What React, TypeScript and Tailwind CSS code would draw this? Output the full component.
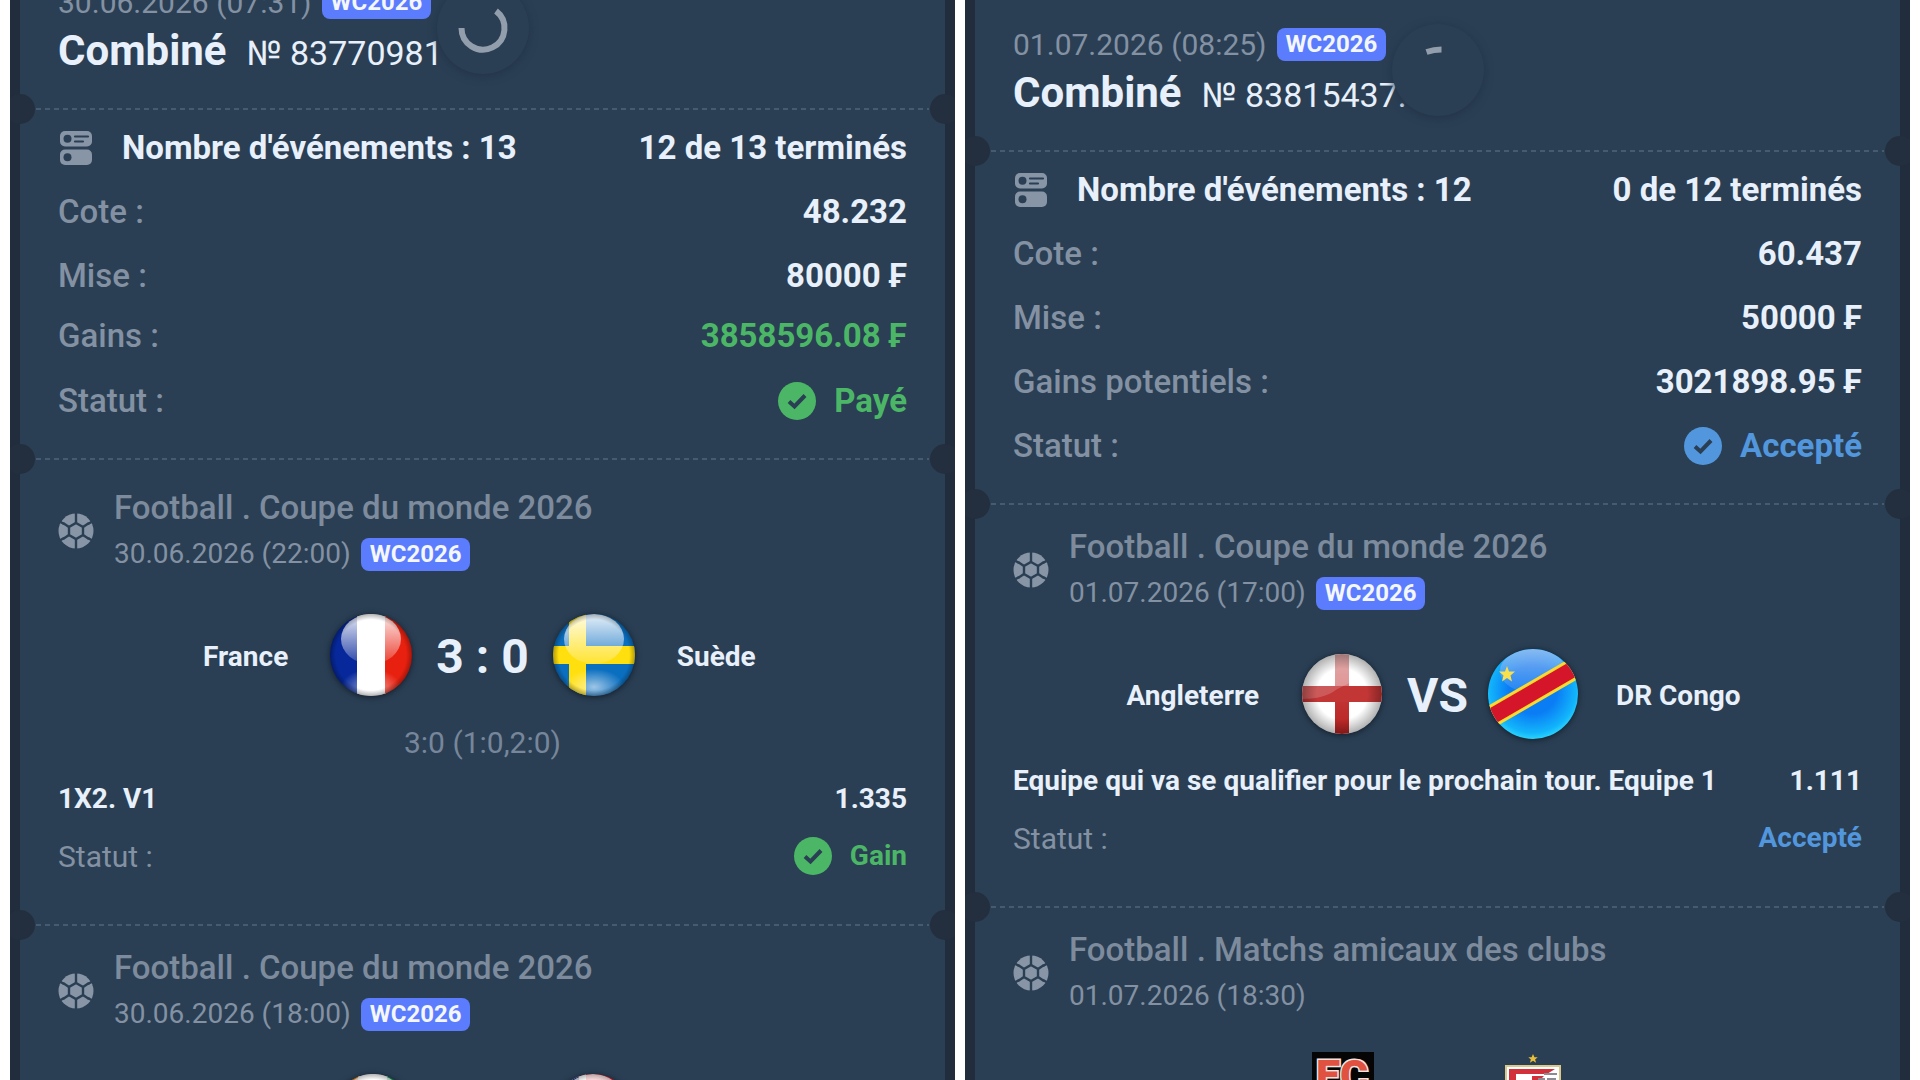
import type { ReactNode } from 'react';
import clsx from 'clsx';

type Tone = 'green' | 'blue' | 'light';

type Match = {
    title: string;
    date: string;
    badge?: string;
    home?: string;
    away?: string;
    homeIcon: ReactNode;
    awayIcon: ReactNode;
    score?: string;
    wideScore?: boolean;
    details?: string;
    bet?: string;
    odds?: string;
    status?: string;
    tone?: Tone;
    withCheck?: boolean;
};

const toneClass: Record<Tone, string> = {
    green: 'text-[#4bb766]',
    blue: 'text-[#5297de]',
    light: 'text-[#e8f0fb]',
};

const Gloss = ({ id }: { id: string }) => (
    <>
        <defs>
            <linearGradient id={`${id}-top`} x1="0" y1="0" x2="0" y2="1">
                <stop offset="0" stopColor="#fff" stopOpacity="0.9" />
                <stop offset="1" stopColor="#fff" stopOpacity="0.15" />
            </linearGradient>
            <radialGradient id={`${id}-low`}>
                <stop offset="0" stopColor="#fff" stopOpacity="0.6" />
                <stop offset="1" stopColor="#fff" stopOpacity="0" />
            </radialGradient>
            <radialGradient id={`${id}-edge`}>
                <stop offset="0.84" stopColor="#000" stopOpacity="0" />
                <stop offset="1" stopColor="#000" stopOpacity="0.35" />
            </radialGradient>
        </defs>
        <ellipse cx="45" cy="29" rx="30" ry="25" fill={`url(#${id}-top)`} />
        <ellipse cx="45" cy="77" rx="30" ry="18" fill={`url(#${id}-low)`} />
        <circle cx="45" cy="45" r="42" fill={`url(#${id}-edge)`} />
    </>
);

const Flag = ({ id, radius = 41, gloss = true, children }: { id: string; radius?: number; gloss?: boolean; children: ReactNode }) => (
    <svg viewBox="0 0 90 90" className="size-[90px] shrink-0 overflow-visible drop-shadow-[0_1px_3px_#121c28]" aria-hidden="true">
        <defs>
            <clipPath id={`${id}-clip`}>
                <circle cx="45" cy="45" r={radius} />
            </clipPath>
        </defs>
        <g clipPath={`url(#${id}-clip)`}>
            {children}
            {gloss && <Gloss id={id} />}
        </g>
    </svg>
);

const FranceFlag = () => (
    <Flag id="france">
        <rect width="32" height="90" fill="#06289a" />
        <rect x="31" width="29" height="90" fill="#fff" />
        <rect x="59" width="31" height="90" fill="#e8200f" />
    </Flag>
);

const SwedenFlag = () => (
    <Flag id="sweden">
        <rect width="90" height="90" fill="#0b6fc0" />
        <rect x="20" width="17" height="90" fill="#ffdf0d" />
        <rect y="36" width="90" height="18" fill="#ffdf0d" />
    </Flag>
);

const IvoryCoastFlag = () => (
    <Flag id="ivory">
        <rect width="32" height="90" fill="#f08a1d" />
        <rect x="30" width="30" height="90" fill="#fff" />
        <rect x="59" width="31" height="90" fill="#0d9a4e" />
    </Flag>
);

const NorwayFlag = () => (
    <Flag id="norway">
        <rect width="90" height="90" fill="#e01f2b" />
        <path d="M28 0v90M0 45h90" stroke="#fff" strokeWidth="20" />
        <path d="M26 0v90M0 45h90" stroke="#0d2c80" strokeWidth="10" />
    </Flag>
);

const EnglandFlag = () => (
    <Flag id="england" radius={40} gloss={false}>
        <defs>
            <radialGradient id="england-shade">
                <stop offset="0.6" stopColor="#000" stopOpacity="0" />
                <stop offset="1" stopColor="#000" stopOpacity="0.35" />
            </radialGradient>
            <linearGradient id="england-bar" x1="0" y1="0" x2="0" y2="1">
                <stop offset="0" stopColor="#dc9a9a" />
                <stop offset="0.4" stopColor="#d98080" />
                <stop offset="0.55" stopColor="#c23434" />
                <stop offset="1" stopColor="#b82020" />
            </linearGradient>
        </defs>
        <rect width="90" height="90" fill="#fff" />
        <rect x="38" width="14" height="90" fill="url(#england-bar)" />
        <rect y="37" width="90" height="16" fill="#c23636" />
        <path d="M0 0h90C78 30 50 32 36 43 24 50 10 50 0 50z" fill="#fff" fillOpacity="0.18" />
        <circle cx="45" cy="45" r="42" fill="url(#england-shade)" />
    </Flag>
);

const CongoFlag = () => (
    <Flag id="congo" radius={45} gloss={false}>
        <defs>
            <radialGradient id="congo-sky" cx="0.5" cy="0.45" r="0.6">
                <stop offset="0.45" stopColor="#0a7df5" />
                <stop offset="0.8" stopColor="#12b4fb" />
                <stop offset="1" stopColor="#3beafc" />
            </radialGradient>
            <linearGradient id="congo-gloss" x1="0" y1="0" x2="0" y2="1">
                <stop offset="0" stopColor="#9dbcf0" stopOpacity="0.85" />
                <stop offset="1" stopColor="#6ea4f0" stopOpacity="0.25" />
            </linearGradient>
        </defs>
        <rect width="90" height="90" fill="url(#congo-sky)" />
        <ellipse cx="45" cy="22" rx="33" ry="22" fill="url(#congo-gloss)" />
        <path d="M-6 73 94 15" stroke="#fcd92c" strokeWidth="22" />
        <path d="M-6 73 94 15" stroke="#d4152a" strokeWidth="16" />
        <path d="M19 17l2 5.500h6l-4.500 4 1.500 6-5-3.500-5 3.500 1.500-6-4.500-4h6z" fill="#fae04a" />
    </Flag>
);

const ClubLogo = () => (
    <svg viewBox="0 0 90 90" className="size-[90px] shrink-0" aria-hidden="true">
        <rect x="14" width="62" height="90" fill="#050505" />
        <text x="18" y="38" fontFamily="Roboto, sans-serif" fontWeight="900" fontSize="43" fill="#e0523f" stroke="#f3e4e0" strokeWidth="3" paintOrder="stroke">
            EC
        </text>
    </svg>
);

const ClubCrest = () => (
    <svg viewBox="0 0 90 90" className="size-[90px] shrink-0" aria-hidden="true">
        <path d="M45 2l1.400 3.200h3.300l-2.600 2.200 1 3.400-3.100-2-3.100 2 1-3.400-2.600-2.200h3.300z" fill="#e9bf3a" />
        <path d="M18 14h54v50q0 12-27 24-27-12-27-24z" fill="#fff" stroke="#d9c88a" strokeWidth="2" />
        <path d="M21 17h46l-8 5H28v42h-7z" fill="#d2303a" />
        <path d="M44 24h12l-8 8-4 16z" fill="#d2303a" />
        <path d="M56 22h13M51 36v-9h6M60 38V27h7v11M60 32h7" fill="none" stroke="#8b8d92" strokeWidth="2" />
    </svg>
);

const EventsIcon = () => (
    <svg viewBox="0 0 32 34" className="h-[34px] w-9 shrink-0" aria-hidden="true">
        <rect width="32" height="15.500" rx="5" fill="#8895a6" />
        <rect y="18.500" width="32" height="15.500" rx="5" fill="#8895a6" />
        <circle cx="7.500" cy="7.800" r="4" fill="#2a3f54" />
        <circle cx="7.500" cy="26.200" r="4" fill="#2a3f54" />
        <path d="M15 5.500h13M15 10.500h8" stroke="#2a3f54" strokeWidth="2.200" strokeLinecap="round" />
    </svg>
);

const BallIcon = () => (
    <svg viewBox="0 0 36 36" className="size-9 shrink-0" aria-hidden="true">
        <circle cx="18" cy="18" r="17.500" fill="#8895a6" />
        <g fill="none" stroke="#2a3f54" strokeWidth="2.400">
            <path d="M18 10l7 4v8l-7 4-7-4v-8z" />
            <path d="M18 0v10M18 26v10M25 14l6-4M25 22l6 4M11 14l-6-4M11 22l-6 4" />
            <path d="M6 11 1 8M30 11l5-3M6 25l-5 3M30 25l5 3" />
        </g>
    </svg>
);

const CheckIcon = () => (
    <svg viewBox="0 0 38 38" className="size-[38px] shrink-0" aria-hidden="true">
        <circle cx="19" cy="19" r="19" fill="currentColor" />
        <path d="M11 19.500l5.500 5L27 13.500" fill="none" stroke="#2a3f54" strokeWidth="4" />
    </svg>
);

const Spinner = ({ arc }: { arc: string }) => (
    <div className="absolute top-6 left-1/2 size-[92px] -translate-x-1/2 rounded-full bg-[#2a3f54] shadow-[0_2px_8px_#233347]">
        <svg viewBox="0 0 92 92" className="size-full" aria-hidden="true">
            <path d={arc} fill="none" stroke="#939eac" strokeWidth="6" />
        </svg>
    </div>
);

const Badge = ({ children }: { children: ReactNode }) => (
    <span className="flex h-[33px] items-center rounded-lg bg-[#5b7cfd] px-[9px] text-2xl font-bold text-[#f4f7ff]">{children}</span>
);

const Divider = () => (
    <div className="relative h-0.5">
        <div className="mx-4 h-full bg-[repeating-linear-gradient(90deg,#465b71_0_5px,transparent_5px_9px)]" />
        <span className="absolute top-1/2 left-0 size-[30px] -translate-1/2 rounded-full bg-[#232f3e]" />
        <span className="absolute top-1/2 right-0 size-[30px] translate-x-1/2 -translate-y-1/2 rounded-full bg-[#232f3e]" />
    </div>
);

const Row = ({ label, value, tone = 'light', check = false, className = 'h-16' }: { label: string; value: string; tone?: Tone; check?: boolean; className?: string }) => (
    <div className={clsx('flex items-center justify-between', className)}>
        <dt className="font-medium text-[#8391a3]">{label}</dt>
        <dd className={clsx('flex items-center gap-[18px] font-bold', toneClass[tone])}>
            {check && <CheckIcon />}
            {value}
        </dd>
    </div>
);

const MatchSection = ({ match, className = 'pt-[19px]' }: { match: Match; className?: string }) => (
    <section className={clsx('px-[38px] pb-[39px]', className)}>
        <header className="flex items-center gap-5">
            <BallIcon />
            <div>
                <h3 className="text-[33px] leading-[46px] font-medium text-[#7d8b9d]">{match.title}</h3>
                <div className="flex h-[46px] items-center gap-[10px] text-[28px] text-[#8391a3]">
                    {match.date}
                    {match.badge && <Badge>{match.badge}</Badge>}
                </div>
            </div>
        </header>

        <div className="mt-[33px] grid grid-cols-[1fr_auto_1fr] items-center gap-[38px] text-[28px] font-bold text-[#e8f0fb]">
            <span className="pt-1 text-right">{match.home}</span>
            <div className="flex items-center gap-5">
                {match.homeIcon}
                <span className={clsx('pt-1 text-center text-5xl', match.wideScore ? 'min-w-[90px]' : 'min-w-[60px]')}>{match.score}</span>
                {match.awayIcon}
            </div>
            <span className="pt-1">{match.away}</span>
        </div>

        <div className="mt-[14px] text-[28px]">
            {match.details && <p className="text-center text-[30px] leading-[57px] text-[#77869a]">{match.details}</p>}
            <div className="flex h-14 items-center justify-between font-bold text-[#e8f0fb]">
                <span>{match.bet}</span>
                <span>{match.odds}</span>
            </div>
            {match.status && (
                <div className="flex h-[58px] items-center justify-between">
                    <span className="text-[30px] text-[#8391a3]">Statut :</span>
                    <span className={clsx('flex items-center gap-[18px] font-bold', toneClass[match.tone ?? 'light'])}>
                        {match.withCheck && <CheckIcon />}
                        {match.status}
                    </span>
                </div>
            )}
        </div>
    </section>
);

type TicketProps = {
    date: string;
    number: string;
    arc: string;
    events: string;
    finished: string;
    scrolled?: boolean;
    rows: ReactNode;
    children: ReactNode;
};

const Ticket = ({ date, number, arc, events, finished, scrolled = false, rows, children }: TicketProps) => (
    <article className="min-w-0 flex-1 overflow-hidden bg-[#212d3d] px-[10px]">
        <div className={clsx('relative min-h-full bg-[#2a3f54]', scrolled && '-mt-[42px]')}>
            <header className="h-[150px] px-[38px] pt-[21px]">
                <div className="flex h-[46px] items-center gap-[10px] text-[30px] text-[#8391a3]">
                    {date}
                    <Badge>WC2026</Badge>
                </div>
                <div className="flex h-[52px] items-baseline gap-5 text-[#e8f0fb]">
                    <h2 className="text-[42px] leading-[52px] font-bold">Combiné</h2>
                    <span className="text-[34px]">№ {number}</span>
                </div>
            </header>
            <Spinner arc={arc} />
            <Divider />
            <section className="px-[38px] pt-[6px] pb-[25px] text-[33px]">
                <div className="flex h-16 items-center font-bold text-[#e8f0fb]">
                    <EventsIcon />
                    <h3 className="ml-7">{events}</h3>
                    <span className="ml-auto">{finished}</span>
                </div>
                <dl>{rows}</dl>
            </section>
            <Divider />
            {children}
        </div>
    </article>
);

const franceSweden: Match = {
    title: 'Football . Coupe du monde 2026',
    date: '30.06.2026 (22:00)',
    badge: 'WC2026',
    home: 'France',
    away: 'Suède',
    homeIcon: <FranceFlag />,
    awayIcon: <SwedenFlag />,
    score: '3 : 0',
    wideScore: true,
    details: '3:0 (1:0,2:0)',
    bet: '1X2. V1',
    odds: '1.335',
    status: 'Gain',
    tone: 'green',
    withCheck: true,
};

const ivoryNorway: Match = {
    title: 'Football . Coupe du monde 2026',
    date: '30.06.2026 (18:00)',
    badge: 'WC2026',
    homeIcon: <IvoryCoastFlag />,
    awayIcon: <NorwayFlag />,
    wideScore: true,
};

const englandCongo: Match = {
    title: 'Football . Coupe du monde 2026',
    date: '01.07.2026 (17:00)',
    badge: 'WC2026',
    home: 'Angleterre',
    away: 'DR Congo',
    homeIcon: <EnglandFlag />,
    awayIcon: <CongoFlag />,
    score: 'VS',
    bet: 'Equipe qui va se qualifier pour le prochain tour. Equipe 1',
    odds: '1.111',
    status: 'Accepté',
    tone: 'blue',
};

const clubFriendly: Match = {
    title: 'Football . Matchs amicaux des clubs',
    date: '01.07.2026 (18:30)',
    homeIcon: <ClubLogo />,
    awayIcon: <ClubCrest />,
};

const App = () => (
    <main className="flex h-screen gap-[10px] overflow-hidden bg-white px-[10px] font-[Roboto,sans-serif]">
        <Ticket
            scrolled
            date="30.06.2026 (07:31)"
            number="83770981"
            arc="M24.500 46A21.500 21.500 0 1 0 59 29"
            events="Nombre d'événements : 13"
            finished="12 de 13 terminés"
            rows={
                <>
                    <Row label="Cote :" value="48.232" />
                    <Row label="Mise :" value="80000 ₣" />
                    <Row label="Gains :" value="3858596.08 ₣" tone="green" className="h-14" />
                    <Row label="Statut :" value="Payé" tone="green" check className="mt-[5px] h-16" />
                </>
            }
        >
            <MatchSection match={franceSweden} className="pt-[25px]" />
            <Divider />
            <MatchSection match={ivoryNorway} />
        </Ticket>

        <Ticket
            date="01.07.2026 (08:25)"
            number="83815437."
            arc="M34.500 28Q42 25.500 49.500 25.500"
            events="Nombre d'événements : 12"
            finished="0 de 12 terminés"
            rows={
                <>
                    <Row label="Cote :" value="60.437" />
                    <Row label="Mise :" value="50000 ₣" />
                    <Row label="Gains potentiels :" value="3021898.95 ₣" />
                    <Row label="Statut :" value="Accepté" tone="blue" check />
                </>
            }
        >
            <MatchSection match={englandCongo} />
            <Divider />
            <MatchSection match={clubFriendly} />
        </Ticket>
    </main>
);

export default App;
